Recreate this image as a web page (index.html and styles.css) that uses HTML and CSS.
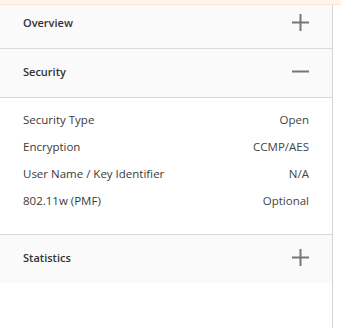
FILE: index.html
```html
<!DOCTYPE html>
<html>
<head>
<meta charset="utf-8">
<link rel="stylesheet" href="styles.css">
</head>
<body>
<div class="topbar"></div>
<div class="panel">
  <div class="section">
    <div class="header first">
      <span class="title">Overview</span>
      <svg class="icon" width="17" height="17" viewBox="0 0 17 17"><path d="M8.5 0V17M0 8.5H17" stroke="#767676" stroke-width="2"/></svg>
    </div>
  </div>
  <div class="section">
    <div class="header">
      <span class="title">Security</span>
      <svg class="icon" width="17" height="17" viewBox="0 0 17 17"><path d="M0 8.5H17" stroke="#767676" stroke-width="2"/></svg>
    </div>
    <div class="content">
      <div class="row"><span>Security Type</span><span>Open</span></div>
      <div class="row"><span>Encryption</span><span>CCMP/AES</span></div>
      <div class="row"><span>User Name / Key Identifier</span><span>N/A</span></div>
      <div class="row"><span>802.11w (PMF)</span><span>Optional</span></div>
    </div>
  </div>
  <div class="section last">
    <div class="header">
      <span class="title">Statistics</span>
      <svg class="icon" width="17" height="17" viewBox="0 0 17 17"><path d="M8.5 0V17M0 8.5H17" stroke="#767676" stroke-width="2"/></svg>
    </div>
  </div>
</div>
</body>
</html>
```
FILE: styles.css
```css
html, body {
  margin: 0;
  padding: 0;
  background: #fff;
  height: 100%;
}
body {
  font-family: "Open Sans", "Noto Sans", sans-serif;
  color: #333;
  display: flex;
  flex-direction: column;
}
.topbar {
  height: 4px;
  background: #fef5ef;
  border-bottom: 1px solid #fbe3d5;
  flex: none;
}
.panel {
  width: 332px;
  border-right: 1px solid #d4d4d4;
  flex: 1;
}
.section {
  border-bottom: 1px solid #d9d9d9;
}
.section.last {
  border-bottom: none;
}
.header {
  box-sizing: border-box;
  height: 48px;
  background: #fafafa;
  display: flex;
  align-items: center;
  justify-content: space-between;
  padding: 0 23px 3px 23px;
}
.header.first {
  height: 43px;
  padding-bottom: 9px;
}
.title {
  font-size: 11px;
  font-weight: 600;
  color: #333;
}
.icon {
  display: block;
}
.content {
  background: #fff;
  padding: 8px 23px 20px 23px;
  border-top: 1px solid #d9d9d9;
}
.row {
  height: 27px;
  display: flex;
  align-items: center;
  justify-content: space-between;
  font-size: 11.5px;
  color: #3a3a3a;
}
.row span:last-child {
  color: #444;
}
```
